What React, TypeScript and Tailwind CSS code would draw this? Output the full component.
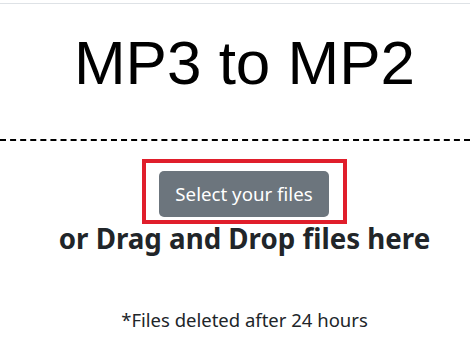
export default function App() {
  return (
    <div className="w-[470px] h-[353px] overflow-hidden bg-white">
      <div className="pt-[3px]">
        <div className="border-t border-[#dee2e6]" />
      </div>
      <div className="pl-[19px] flex flex-col items-center">
        <div className="mt-[23px] font-['Liberation_Sans',Arial,sans-serif] text-[62px] leading-[71px] text-black whitespace-nowrap">
          MP3 to MP2
        </div>
      </div>
      <div className="mt-[41px] border-t-2 border-dashed border-black" />
      <div className="pl-[19px] flex flex-col items-center font-['Noto_Sans',sans-serif] text-[#212529]">
        <div className="mt-[18px] border-4 border-[#e01e2b] pt-[8px] pb-[3px] pl-[13px] pr-[14px]">
          <button className="w-[170px] h-[46px] rounded-[5px] bg-[#6c757d] text-white text-[18.7px] leading-[26px] flex items-center justify-center whitespace-nowrap">
            Select your files
          </button>
        </div>
        <div className="mt-[-3px] font-bold text-[27.7px] leading-[34px] whitespace-nowrap">
          or Drag and Drop files here
        </div>
        <div className="mt-[52px] text-[18.5px] leading-[25px] whitespace-nowrap">
          *Files deleted after 24 hours
        </div>
      </div>
    </div>
  );
}
